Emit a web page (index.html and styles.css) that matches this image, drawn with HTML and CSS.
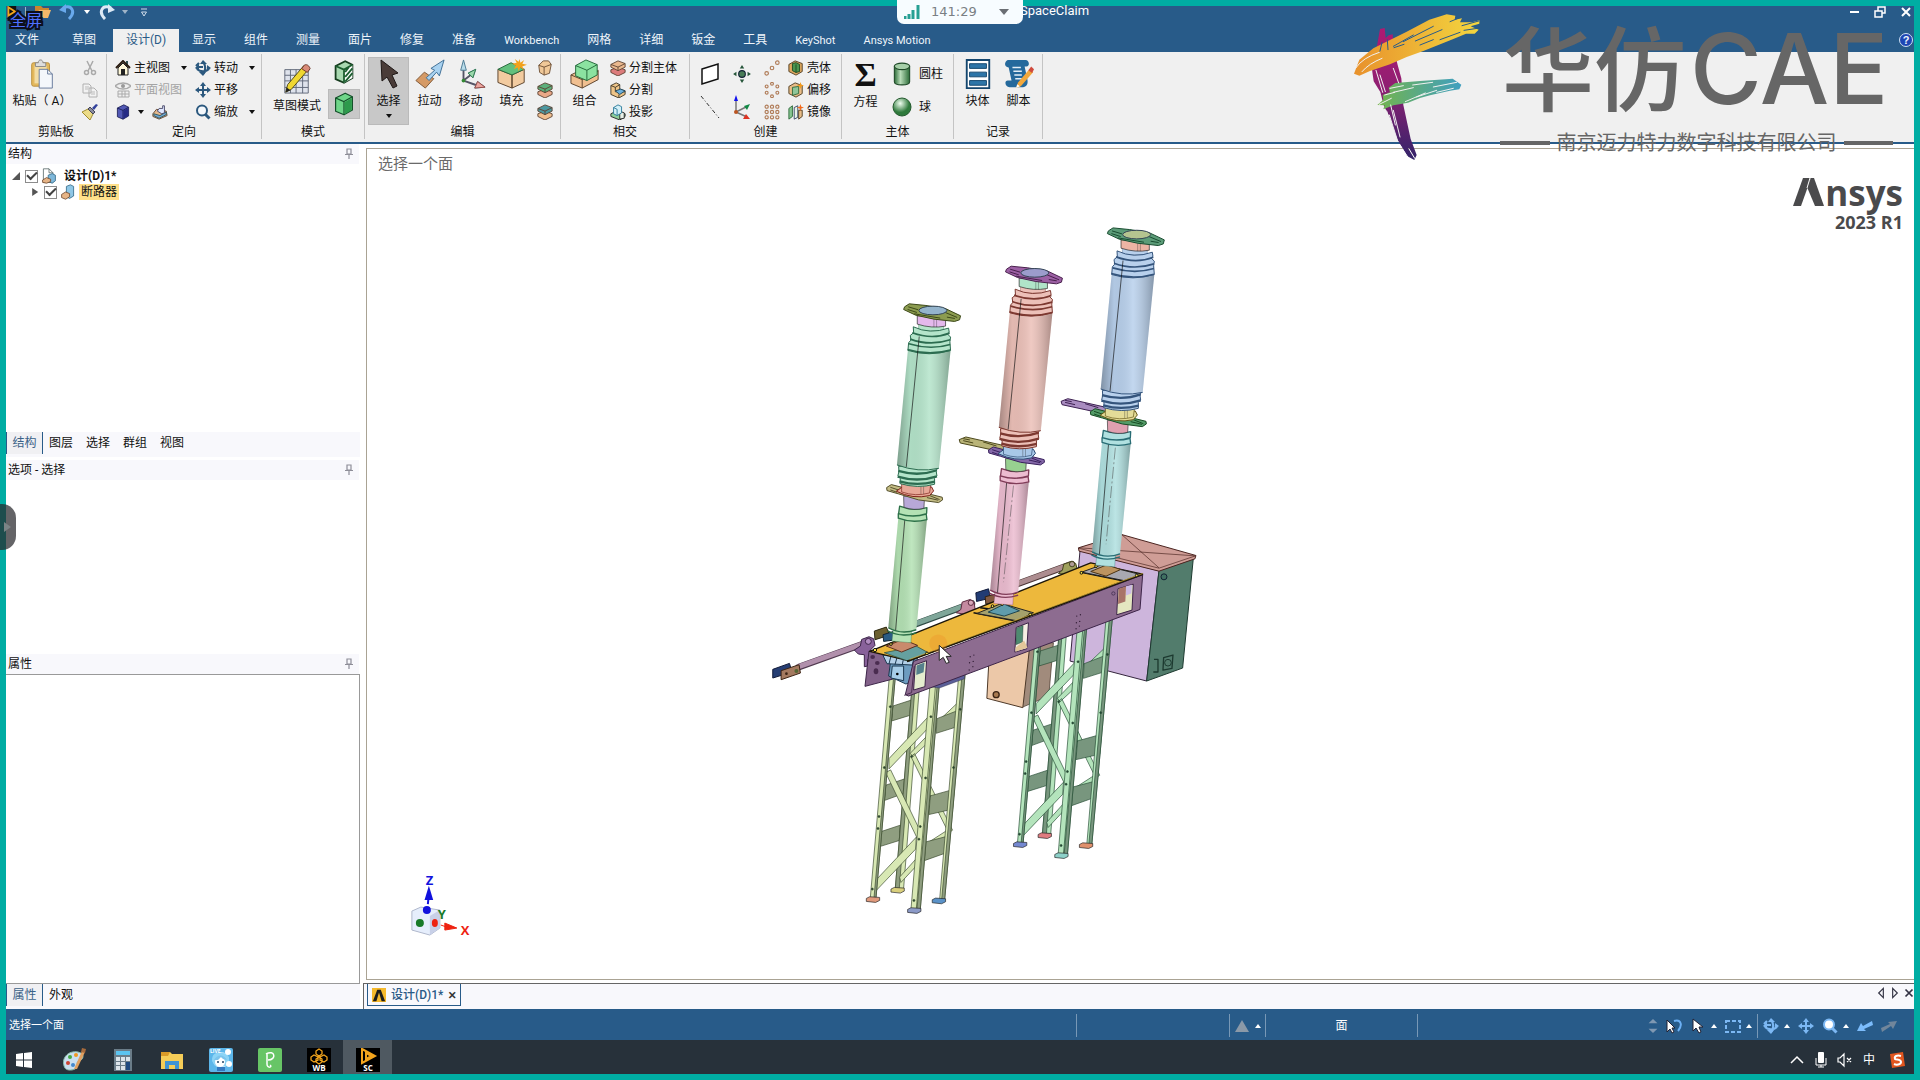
FILE: index.html
```html
<!DOCTYPE html>
<html lang="zh-CN">
<head>
<meta charset="utf-8">
<title>SpaceClaim</title>
<link rel="stylesheet" href="styles.css">
</head>
<body>
<svg class="defs" aria-hidden="true">
  <defs>
    <linearGradient id="yellow" x1="0" x2="1"><stop offset="0" stop-color="#e8912c"/><stop offset="1" stop-color="#f3d63f"/></linearGradient>
    <linearGradient id="purple" x1="0" y1="0" x2="0" y2="1"><stop offset="0" stop-color="#b01a72"/><stop offset=".45" stop-color="#8f1f72"/><stop offset="1" stop-color="#33246a"/></linearGradient>
    <linearGradient id="green" x1="0" x2="1"><stop offset="0" stop-color="#74b44c"/><stop offset="1" stop-color="#3f9fc0"/></linearGradient>
    <linearGradient id="cyl" x1="0" x2="1"><stop offset="0" stop-color="#2c6c38"/><stop offset=".4" stop-color="#b8dcb8"/><stop offset="1" stop-color="#2c6c38"/></linearGradient>
    <radialGradient id="ball" cx=".4" cy=".3"><stop offset="0" stop-color="#f0fff0"/><stop offset="1" stop-color="#2f7a3c"/></radialGradient>
    <linearGradient id="shade" x1="0" x2="1"><stop offset="0" stop-color="#000" stop-opacity=".3"/><stop offset=".25" stop-color="#000" stop-opacity=".04"/><stop offset=".6" stop-color="#fff" stop-opacity=".15"/><stop offset="1" stop-color="#000" stop-opacity=".28"/></linearGradient>
    <mask id="bristles" maskUnits="userSpaceOnUse" x="0" y="0" width="480" height="480">
      <path d="M0 0h480v480H0z" fill="#fff"/>
      <g fill="none" stroke="#000" stroke-width="3" stroke-linecap="round">
        <path d="M48 188q20-30 70-46M66 200q20-24 60-40M126 112l-6 26M142 104l2 30M160 124l60-34M190 110l90-46M162 128l30-10M226 108l80-34M240 120l40-16M330 50l34-14M366 62l50-14M372 76l40-6M300 104l60-22"/>
        <path d="M108 196l20 66M120 210l16 50M160 190l16 44M140 318l30 90M148 330l34 106M160 316l20 80M180 420l26 40M206 430l18 30M152 300l14 60"/>
        <path d="M118 298l36-18M134 270l30-8M150 250l40-8M160 262l60-14M196 290l60-26M230 276l60-20M280 246l70-14M290 262l50-12M218 240l60-8"/>
      </g>
    </mask>

    <symbol id="cube" viewBox="0 0 20 20"><path d="M3 5l8-4 6 3v11l-7 4-7-3z" fill="var(--a)" stroke="var(--e)" stroke-linejoin="round"/><path d="M3 5l7 3v11M10 8l7-4" fill="none" stroke="var(--e)"/><path d="M10.500 8.500l6-3.500v10l-6 3.500z" fill="var(--b)"/></symbol>
    <symbol id="paste" viewBox="0 0 24 32"><rect x="1" y="4" width="19" height="25" rx="2" fill="#e3b85c" stroke="#b98e3c"/><path d="M4 7h13v19H4z" fill="#f2dca4"/><path d="M5 8V4h3c0-4 5-4 5 0h3v4z" fill="#ddd" stroke="#888"/><path d="M9 11h9l5 5v15H9z" fill="#f4f7fb" stroke="#64779a"/><path d="M18 11v5h5" fill="none" stroke="#64779a"/></symbol>
    <symbol id="cut" viewBox="0 0 16 16"><path d="M5 1l5 10M11 1L6 11" stroke="#aaa" stroke-width="1.500"/><circle cx="4.500" cy="12.500" r="2" fill="none" stroke="#aaa" stroke-width="1.500"/><circle cx="11.500" cy="12.500" r="2" fill="none" stroke="#aaa" stroke-width="1.500"/></symbol>
    <symbol id="copy" viewBox="0 0 16 16"><path d="M1 2h6l2 2v7H1zM7 6h5l3 3v6H7z" fill="#f2f2f2" stroke="#b0b0b0"/><path d="M9 10h4M9 12h4M3 5h4M3 7h3" stroke="#bbb"/></symbol>
    <symbol id="brush" viewBox="0 0 16 16"><path d="M0 8l6-3 5 5-3 6c-3-3-5-5-8-8z" fill="#ecdc88" stroke="#a08c30"/><path d="M6 5l2-2 5 5-2 2z" fill="#8a8ca0" stroke="#445"/><path d="M10 4l4-4 2 1-4 5z" fill="#33429c"/></symbol>
    <symbol id="home" viewBox="0 0 16 16"><path d="M11 1h2v5h-2z" fill="#355"/><path d="M3 8l5-5 5 5v7H3z" fill="#fff8d8" stroke="#222"/><path d="M1 8l7-7 7 7" fill="none" stroke="#2a1c10" stroke-width="2"/><path d="M6 9h4v6H6z" fill="#222"/></symbol>
    <symbol id="plan" viewBox="0 0 16 16"><path d="M0 4c4-4 12-4 16 0-4 4-12 4-16 0z" fill="none" stroke="#aaa" stroke-width="1.500"/><circle cx="8" cy="4" r="2" fill="#999"/><path d="M3 9h11v6H3zM3 12h11M7 9v6M10 9v6" fill="none" stroke="#aaa"/></symbol>
    <symbol id="iso" viewBox="0 0 18 16"><path d="M1 10l4-5 11 2 1 5-9 4-7-3z" fill="#e6b98c" stroke="#5c4330"/><path d="M2 10l7 2 7-4v3l-8 4-6-3z" fill="#6fa8d8" stroke="#355"/><path d="M6 7l2-3h4V1h2v8l-3 1z" fill="#dfe7ff" stroke="#446"/></symbol>
    <symbol id="spin" viewBox="0 0 16 16"><path d="M1 6l3-3M2 9c3 3 9 3 12 0M8 2c3 3 3 9 0 12" fill="none" stroke="currentColor" stroke-width="2.200"/><path d="M8 0l4 4H5zM8 16l3-4H4zM0 8l4-4v7zM16 8l-4-3v6z" fill="currentColor"/><path d="M3 7h5" stroke="currentColor" stroke-width="2"/></symbol>
    <symbol id="pan" viewBox="0 0 16 16"><path d="M8 2v12M2 8h12" stroke="currentColor" stroke-width="2"/><path d="M8 0l3 4H5zM8 16l3-4H5zM0 8l4-3v6zM16 8l-4-3v6z" fill="currentColor"/></symbol>
    <symbol id="zoom" viewBox="0 0 16 16"><circle cx="7" cy="6.500" r="5" fill="var(--a,#f4f8fc)" stroke="currentColor" stroke-width="2"/><path d="M10.500 10.500l4 4" stroke="currentColor" stroke-width="3"/></symbol>
    <symbol id="sketch" viewBox="0 0 30 32"><path d="M2 6h25v25H2zM2 12h25M2 18h25M2 25h25M8 6v25M14 6v25M21 6v25" fill="#dfe3ec" stroke="#5f6678"/><path d="M3 30l2-8L22 2l5 4L9 27z" fill="#efd731" stroke="#4b4414"/><path d="M20 5l3-4c3-1 5 1 6 4l-3 4z" fill="#d98b78" stroke="#6b3528"/><path d="M3 30l1-5 4 3z" fill="#222"/></symbol>
    <symbol id="section" viewBox="0 0 20 20"><path d="M3 5l8-4 6 3v11l-7 4-7-3z" fill="#a8d8b0" stroke="#163c1e" stroke-width="1.500"/><path d="M10 8l7-4v11l-7 4z" fill="#fff"/><path d="M3 5l7 3v11M10 8l7-4M11 14l6-7M11 18l6-7M11 10l3-4" fill="none" stroke="#1c5f30" stroke-width="1.500"/></symbol>
    <symbol id="arrow" viewBox="0 0 20 30"><path d="M2 1l1 21 5-4 6 11 4-2-5-11 6-2z" fill="#4a3c38" stroke="#1f1816"/></symbol>
    <symbol id="pull" viewBox="0 0 32 32"><path d="M1 23l9-9 10 7-9 10z" fill="#d59a66" stroke="#7c5433"/><path d="M12 20l9-8-4-2L31 1l-5 17-3-4-8 9z" fill="#a9d2f0" stroke="#3c6c92"/></symbol>
    <symbol id="move" viewBox="0 0 32 32"><path d="M8 23V8M8 23l9-7M8 23l14 5" stroke="#556" stroke-width="2"/><path d="M8 1l3 11H5zM21 11l-3 9-5-5zM31 30l-11 1 3-7z" fill="#b9dcea" stroke="#4a7890"/><path d="M21 11l-3 9-5-5z" fill="#9bd8ac" stroke="#2c7848"/><path d="M31 30l-11 1 3-7z" fill="#eaa6a0" stroke="#984840"/><circle cx="8" cy="23" r="2" fill="#383"/></symbol>
    <symbol id="fill" viewBox="0 0 32 32"><path d="M1 11l15 6v14L1 25zM16 17l13-6v14l-13 6z" fill="#f2cba0" stroke="#59402a"/><path d="M1 11l14-7 14 7-13 6z" fill="#63c07d" stroke="#28683c"/><path d="M24 0l1 4 4-3-2 4 5 1-5 2 2 4-4-3-2 4-1-4-4 2 2-4-4-2 5-1-2-4 4 3z" fill="#f2a21c"/></symbol>
    <symbol id="shells" viewBox="0 0 16 18"><path d="M1 6l5-5h6l3 4-2 10-6 2-5-3z" fill="#f0c898" stroke="#694a30"/><path d="M1 6l6 2v9M7 8l8-3" fill="none" stroke="#694a30"/></symbol>
    <symbol id="stack" viewBox="0 0 18 18"><path d="M1 11l8-3 8 3v3l-8 4-8-4z" fill="var(--b)" stroke="#5b4232"/><path d="M1 5l8-4 8 3v4l-8 4-8-4z" fill="var(--a)" stroke="#5b4232"/><path d="M1 5l8 3 8-4M9 8v4" fill="none" stroke="#5b4232"/></symbol>
    <symbol id="lstep" viewBox="0 0 18 18"><path d="M1 4l6-3 4 2v5l6 2v4l-7 4-9-4z" fill="#eec488" stroke="#3c3424"/><path d="M1 4l5 2v5l11 0M6 6l5-3M10 18v-4" fill="none" stroke="#3c3424"/><path d="M6 10l6-2 5 2-6 4z" fill="var(--b)" stroke="#245"/></symbol>
    <symbol id="project" viewBox="0 0 18 18"><path d="M1 11l6-3 10 3v3l-6 4-10-4z" fill="#8ccc98" stroke="#222"/><path d="M11 8l5 2v6l-5 1z" fill="#e8f0e8" stroke="#222"/><path d="M4 4l5-3 4 2v7l-5 3-4-2z" fill="#d4f0f8" stroke="#287898"/><path d="M4 4l4 2v7" fill="none" stroke="#287898"/></symbol>
    <symbol id="combine" viewBox="0 0 32 32"><path d="M1 17l8-4 12 5 9-6v10l-17 9-12-5z" fill="#f0bf90" stroke="#59402a"/><path d="M1 17l12 5 17-9M13 22v9" fill="none" stroke="#59402a"/><path d="M6 7l11-6 12 5v11l-11 6-12-5z" fill="#8be2a0" stroke="#216538"/><path d="M6 7l12 5 11-6M18 12v11" fill="none" stroke="#216538"/></symbol>
    <symbol id="plane" viewBox="0 0 20 26"><path d="M2 8l16-5v15L2 23z" fill="#fff" stroke="#111" stroke-width="1.500"/></symbol>
    <symbol id="axis" viewBox="0 0 20 26"><path d="M1 2l18 22" stroke="#333" stroke-dasharray="4 2 1 2"/></symbol>
    <symbol id="point" viewBox="0 0 18 18"><circle cx="9" cy="9" r="3" fill="#477c56" stroke="#123"/><path d="M9 1l2 3H7zM9 17l2-3H7zM1 9l3-2v4zM17 9l-3-2v4z" fill="#26553a"/></symbol>
    <symbol id="csys" viewBox="0 0 18 26"><path d="M3 18V5M3 18l10-5M3 18l11 5" stroke="#777" stroke-width="1.500"/><path d="M3 1l2 6H1z" fill="#11e"/><path d="M17 10l-3 6-3-4z" fill="#184"/><path d="M17 25l-7 0 3-5z" fill="#d32"/><circle cx="3" cy="18" r="2" fill="#b52"/></symbol>
    <symbol id="pline" viewBox="0 0 18 18"><g fill="none" stroke="#b07c58" stroke-width="1.300"><circle cx="3" cy="15" r="2"/><circle cx="9" cy="9" r="2"/><circle cx="15" cy="3" r="2"/></g></symbol>
    <symbol id="pring" viewBox="0 0 18 18"><g fill="none" stroke="#b07c58" stroke-width="1.300"><circle cx="9" cy="2" r="1.600"/><circle cx="3" cy="5" r="1.600"/><circle cx="15" cy="5" r="1.600"/><circle cx="3" cy="12" r="1.600"/><circle cx="15" cy="12" r="1.600"/><circle cx="9" cy="16" r="1.600"/></g></symbol>
    <symbol id="pgrid" viewBox="0 0 18 18"><g fill="none" stroke="#b07c58" stroke-width="1.300"><circle cx="3" cy="3" r="1.800"/><circle cx="9" cy="3" r="1.800"/><circle cx="15" cy="3" r="1.800"/><circle cx="3" cy="9" r="1.800"/><circle cx="9" cy="9" r="1.800"/><circle cx="15" cy="9" r="1.800"/><circle cx="3" cy="15" r="1.800"/><circle cx="9" cy="15" r="1.800"/><circle cx="15" cy="15" r="1.800"/></g></symbol>
    <symbol id="shell" viewBox="0 0 18 18"><path d="M1 5l7-4 8 3v9l-7 4-8-4z" fill="#e0a860" stroke="#4c381c"/><path d="M5 4l4-1 4 2v8l-4 1-4-2z" fill="#4a9550" stroke="#1c4820"/><path d="M9 5v9" stroke="#1c4820"/></symbol>
    <symbol id="offset" viewBox="0 0 18 18"><path d="M1 5l7-4 8 3v9l-7 4-8-4z" fill="#e9bd88" stroke="#4c381c"/><path d="M5 6l7-1v8l-7 2z" fill="#8fc69a" stroke="#2c6838"/><path d="M14 0l1 3 3 1-3 1-1 3-1-3-3-1 3-1z" fill="#f39a1c"/></symbol>
    <symbol id="mirror" viewBox="0 0 18 18"><path d="M1 5l4-3v12l-4 3z" fill="#86c690" stroke="#2c6838"/><path d="M7 4l4-2v13l-4 2z" fill="#e8f4e8" stroke="#346"/><path d="M12 7h4v7l-4 3z" fill="#e9bd88" stroke="#4c381c"/><path d="M14 0l1 3 3 1-3 1-1 3-1-3-3-1 3-1z" fill="#f36a1c"/></symbol>
    <symbol id="cylinder" viewBox="0 0 18 22"><path d="M2 4v14c0 4 14 4 14 0V4z" fill="url(#cyl)" stroke="#1f4a28"/><ellipse cx="9" cy="4" rx="7" ry="3" fill="#a6cfa8" stroke="#1f4a28"/></symbol>
    <symbol id="sphere" viewBox="0 0 20 20"><circle cx="10" cy="10" r="9" fill="url(#ball)" stroke="#245a2e"/></symbol>
    <symbol id="block" viewBox="0 0 26 32"><path d="M1 1h24v30H1z" fill="#fff" stroke="#14466e" stroke-width="2"/><path d="M4 5h18v5H4zM4 14h18v5H4zM4 23h18v5H4z" fill="#2d75a8" stroke="#14466e"/></symbol>
    <symbol id="script" viewBox="0 0 32 32"><path d="M4 1h19c4 0 5 7 1 7h-2l3 14c1 6-2 8-6 8H6c-5 0-6-7-2-7h4L5 9C0 9 0 3 4 1z" fill="#25699c"/><path d="M9 9h9M10 13h9M11 17h8M12 21h7" stroke="#e4eef6" stroke-width="1.500"/><path d="M13 31l2-6L27 11l4 3-13 15z" fill="#f3a83b"/><path d="M26 12l3-4 3 3-2 4z" fill="#cf4a3c"/><path d="M13 31l1-4 3 2z" fill="#fff"/></symbol>
    <symbol id="pin" viewBox="0 0 10 12"><path d="M3 1h4v5H3zM1 6.500h8M5 7v4" fill="none" stroke="#8e8e98" stroke-width="1.200"/></symbol>
    <symbol id="part" viewBox="0 0 18 20"><path d="M7 3l5-2 4 2v12l-5 3-4-2z" fill="#8fc7e6" stroke="#2f6684"/><path d="M1 13l5-3 5 2v4l-5 3-5-2z" fill="#e6b486" stroke="#6b452c"/></symbol>
    <symbol id="doc" viewBox="0 0 18 20"><path d="M2 1h7l5 5v12H2z" fill="#fff" stroke="#566"/><path d="M9 1v5h5" fill="none" stroke="#566"/><path d="M8 9l5-2 4 2v7l-4 3-5-2z" fill="#7fb8da" stroke="#2f6684"/><path d="M1 15l5-3 5 2v3l-5 2-5-1z" fill="#e6b486" stroke="#6b452c"/></symbol>
    <symbol id="pointer" viewBox="0 0 12 16"><path d="M1 1v12l3-3 3 5 2-1-2-5h4z" fill="#fff" stroke="#223"/></symbol>

    <!-- one insulator pole; the colours come from the class of the group that uses it -->
    <g id="pole">
      <path d="M395 1295l5-45h55l-3 50z" fill="var(--l)" stroke="var(--ls)"/>
      <path d="M414 925L384 1255q40 22 84 6L500 930z" fill="var(--l)"/><path d="M414 925L384 1255q40 22 84 6L500 930z" fill="url(#shade)"/>
      <path d="M384 1255q40 22 84 6M382 1264q40 22 86 6" fill="none" stroke="var(--ls)" stroke-width="4"/>
      <path d="M434 925L406 1262" stroke="#111" stroke-width="2"/>
      <path d="M418 890q40 16 82 4l-1 18q-42 14-84 0zM414 912q42 14 84 2l2 16q-44 12-86-4z" fill="var(--l)" stroke="var(--ls)" stroke-width="4"/>
      <path d="M430 860h63l-2 36q-30 8-60-3z" fill="var(--r)" stroke="#333" stroke-width="2"/>
      <path d="M379 834l14-9 55 14 98 24 1 8-12 8-60-8-60-18-35-10z" fill="var(--q)" stroke="var(--qs)" stroke-width="3"/>
      <path d="M390 833l24 8M500 864l34 8M390 841l20 7M508 858l30 12" stroke="var(--qs)" stroke-width="3"/>
      <path d="M408 845l18-13h88l6 12-12 14q-50 12-100-13z" fill="var(--c)" stroke="var(--cs)" stroke-width="3"/>
      <path d="M424 820h88l-4 30q-42 12-84-3z" fill="var(--c)" stroke="var(--cs)" stroke-width="2"/><path d="M482 828v25M490 828v25" stroke="#222"/>
      <path d="M415 770h118l-5 15 2 14-7 7v18q-50 14-104-2l1-15-7-9 3-13z" fill="var(--u)" stroke="var(--us)" stroke-width="3"/>
      <path d="M414 784q60 18 116-2M412 801q60 18 118-1M418 815q50 15 106 1" fill="none" stroke="var(--us)" stroke-width="7"/>
      <path d="M443 420L410 766q64 24 126 10L571 422z" fill="var(--u)"/><path d="M443 420L410 766q64 24 126 10L571 422z" fill="url(#shade)"/>
      <path d="M410 766q64 24 126 10" fill="none" stroke="var(--us)" stroke-width="3"/>
      <path d="M475 335h75v28H475z" fill="var(--u)" stroke="var(--us)"/>
      <path d="M459 351q50 24 106 4l2 13-6 4 10 10-2 14 2 26q-64 20-128 0l2-23 7-8-2-14 10-8z" fill="var(--u)" stroke="var(--us)" stroke-width="3"/>
      <path d="M456 369q60 22 112 1M450 388q60 22 120 2M446 402q64 20 124 2M442 419q64 20 128 2" fill="none" stroke="var(--us)" stroke-width="5"/>
      <path d="M477 380L438 772" stroke="#111" stroke-width="2"/>
      <path d="M471 318h85v31q-42 8-85-6z" fill="var(--n)" stroke="#222" stroke-width="2"/><path d="M521 325v27M529 325v27" stroke="#222"/>
      <path d="M433 291l14-9 50 5 60 10 44 21-3 12-15 5-62-7-55-12-36-17z" fill="var(--p)" stroke="var(--ps)" stroke-width="3"/>
      <path d="M444 291l30 9M442 299l28 9M555 308l36 15M560 322l24 4M462 312l78 13" stroke="var(--ps)" stroke-width="3"/>
      <ellipse cx="518" cy="302" rx="42" ry="13" fill="var(--d)" stroke="#345" stroke-width="3"/>
    </g>

    <!-- one braced steel support -->
    <g id="tower" stroke="var(--ts)" stroke-width="2" stroke-linejoin="round">
      <path d="M158 170l62-20-4 46-62 19zM136 408l60-20-4 44-60 22zM120 548l60-20-3 46-61 19z" fill="var(--tp)"/>
      <path d="M218 80h22L190 718h-25z" fill="var(--t)"/><path d="M218 80h9L177 718h-12z" fill="var(--tp)"/>
      <path d="M210 312l56-58 4 20-52 48zM212 322l11-9 114 230-12 8zM178 684l54-60 4 18-54 58z" fill="var(--t)"/>
      <path d="M264 580l62-40v20l-62 42zM300 210l58-55-2 25-50 45z" fill="var(--t)"/>
      <path d="M290 208l72-28-4 50-70 22zM270 440l72-20-5 60-71 16zM250 580l76-20-5 50-73 26z" fill="var(--tp)"/>
      <path d="M357 60h19L313 754h-15z" fill="var(--t)"/><path d="M367 60h9L313 754h-9z" fill="var(--tp)"/>
      <path d="M146 328l122-130-2 36-120 125zM136 370l15-8 92 190-10 20zM106 694l122-130-2 36-120 126z" fill="var(--t)"/>
      <path d="M149 60h18L107 746H90z" fill="var(--t)"/><path d="M162 60h5L107 746h-6z" fill="var(--tp)"/>
      <path d="M273 60h28L240 782h-28z" fill="var(--t)"/><path d="M295 60h6L240 782h-10z" fill="var(--tp)"/>
      <path d="M290 60L228 780" fill="none"/>
      <g fill="#243"><circle cx="150" cy="172" r="3"/><circle cx="132" cy="355" r="3"/><circle cx="116" cy="502" r="3"/><circle cx="113" cy="538" r="3"/><circle cx="96" cy="720" r="3"/><circle cx="272" cy="202" r="3"/><circle cx="256" cy="386" r="3"/><circle cx="240" cy="532" r="3"/><circle cx="236" cy="570" r="3"/><circle cx="221" cy="754" r="3"/><circle cx="340" cy="355" r="3"/><circle cx="214" cy="322" r="3"/><circle cx="360" cy="180" r="3"/></g>
    </g>
    <path id="foot" d="M-20-4l10-5 30 2v9l-12 6-28-3z" stroke="#222" stroke-width="2"/>
  </defs>
</svg>

<div class="screen">
  <header class="titlebar">
    <div class="quick">
      <svg class="app-logo" viewBox="0 0 14 20"><path d="M0 0h14v20H0z" fill="#111"/><path d="M1 2l11 7-11 7z" fill="none" stroke="#f3a51d" stroke-width="3"/></svg>
      <i class="divider"></i>
      <button aria-label="打开"><svg viewBox="0 0 18 16"><path d="M1 14V2h6l2 2h6v3" fill="#c9852e"/><path d="M1 14l4-8h12l-3 8z" fill="#f5b96a"/></svg></button>
      <button aria-label="撤销"><svg viewBox="0 0 18 16"><path d="M4 4c9-4 13 4 6 11" fill="none" stroke="#69a9ec" stroke-width="3"/><path d="M0 6l7-6v9z" fill="#69a9ec"/></svg></button>
      <i class="caret light"></i>
      <button aria-label="重做"><svg viewBox="0 0 18 16"><path d="M14 4C5 0 1 8 8 15" fill="none" stroke="#dde9f5" stroke-width="3"/><path d="M18 6l-7-6v9z" fill="#dde9f5"/></svg></button>
      <i class="caret dim"></i>
      <button aria-label="自定义"><svg viewBox="0 0 18 16"><path d="M6 5h6M6.500 8h5L9 12z" fill="none" stroke="#cfdcea"/></svg></button>
    </div>
    <span class="app-title">SpaceClaim</span>
    <div class="window">
      <button aria-label="最小化"><svg viewBox="0 0 16 16"><path d="M4 8h9" stroke="#fff" stroke-width="2"/></svg></button>
      <button aria-label="还原"><svg viewBox="0 0 16 16"><path d="M3 7h7v6H3zM6 7V3h7v6h-3" fill="none" stroke="#fff" stroke-width="1.500"/></svg></button>
      <button aria-label="关闭"><svg viewBox="0 0 16 16"><path d="M4 4l8 8M12 4l-8 8" stroke="#fff" stroke-width="2"/></svg></button>
    </div>
  </header>

  <nav class="tabs">
    <button class="file">文件</button><button class="draft">草图</button><button class="current">设计(D)</button><button>显示</button><button>组件</button><button>测量</button><button>面片</button><button>修复</button><button>准备</button><button class="latin">Workbench</button><button>网格</button><button>详细</button><button>钣金</button><button>工具</button><button class="latin">KeyShot</button><button class="latin">Ansys Motion</button>
    <button class="help" aria-label="帮助">?</button>
  </nav>

  <div class="ribbon">
    <section class="group clipboard"><div class="body">
      <button class="big"><svg><use href="#paste"/></svg>粘贴（ A）</button>
      <div class="rows"><button aria-label="剪切"><svg><use href="#cut"/></svg></button><button aria-label="复制"><svg><use href="#copy"/></svg></button><button aria-label="格式刷"><svg><use href="#brush"/></svg></button></div>
    </div><h2>剪贴板</h2></section>

    <section class="group orient"><div class="body">
      <div class="rows"><button><svg><use href="#home"/></svg>主视图<i class="caret"></i></button><button disabled><svg><use href="#plan"/></svg>平面视图</button><div class="pair"><button><svg class="c-navy"><use href="#cube"/></svg><i class="caret"></i></button><button><svg><use href="#iso"/></svg></button></div></div>
      <div class="rows steel"><button><svg><use href="#spin"/></svg>转动<i class="caret"></i></button><button><svg><use href="#pan"/></svg>平移</button><button><svg><use href="#zoom"/></svg>缩放<i class="caret"></i></button></div>
    </div><h2>定向</h2></section>

    <section class="group mode"><div class="body">
      <button class="big low"><svg><use href="#sketch"/></svg>草图模式</button>
      <div class="toggles"><button aria-label="剖面模式"><svg><use href="#section"/></svg></button><button class="on" aria-label="三维模式"><svg class="c-green"><use href="#cube"/></svg></button></div>
    </div><h2>模式</h2></section>

    <section class="group edit"><div class="body">
      <button class="big on"><svg><use href="#arrow"/></svg>选择<i class="caret"></i></button>
      <button class="big"><svg><use href="#pull"/></svg>拉动</button>
      <button class="big"><svg><use href="#move"/></svg>移动</button>
      <button class="big"><svg><use href="#fill"/></svg>填充</button>
      <div class="rows"><button><svg><use href="#shells"/></svg></button><button><svg class="c-mint"><use href="#stack"/></svg></button><button><svg class="c-teal"><use href="#stack"/></svg></button></div>
    </div><h2>编辑</h2></section>

    <section class="group cross"><div class="body">
      <button class="big"><svg><use href="#combine"/></svg>组合</button>
      <div class="rows"><button><svg class="c-split"><use href="#stack"/></svg>分割主体</button><button><svg class="c-blue"><use href="#lstep"/></svg>分割</button><button><svg><use href="#project"/></svg>投影</button></div>
    </div><h2>相交</h2></section>

    <section class="group create"><div class="body">
      <div class="halves"><button aria-label="平面"><svg><use href="#plane"/></svg></button><button aria-label="轴"><svg><use href="#axis"/></svg></button></div>
      <div class="halves"><button aria-label="点"><svg><use href="#point"/></svg></button><button aria-label="坐标系"><svg><use href="#csys"/></svg></button></div>
      <div class="rows"><button aria-label="线性阵列"><svg><use href="#pline"/></svg></button><button aria-label="圆形阵列"><svg><use href="#pring"/></svg></button><button aria-label="填充阵列"><svg><use href="#pgrid"/></svg></button></div>
      <div class="rows"><button><svg><use href="#shell"/></svg>壳体</button><button><svg><use href="#offset"/></svg>偏移</button><button><svg><use href="#mirror"/></svg>镜像</button></div>
    </div><h2>创建</h2></section>

    <section class="group solid"><div class="body">
      <button class="big"><span class="sigma">Σ</span>方程</button>
      <div class="halves"><button><svg><use href="#cylinder"/></svg>圆柱</button><button><svg><use href="#sphere"/></svg>球</button></div>
    </div><h2>主体</h2></section>

    <section class="group record"><div class="body">
      <button class="big"><svg><use href="#block"/></svg>块体</button>
      <button class="big"><svg><use href="#script"/></svg>脚本</button>
    </div><h2>记录</h2></section>
  </div>

  <main class="workspace">
    <aside class="side">
      <section class="panel tree">
        <h3>结构<svg><use href="#pin"/></svg></h3>
        <ul>
          <li><i class="open"></i><input type="checkbox" id="n1" checked><svg><use href="#doc"/></svg><label for="n1" class="root">设计(D)1*</label></li>
          <li class="child"><i class="shut"></i><input type="checkbox" id="n2" checked><svg><use href="#part"/></svg><label for="n2" class="hot">断路器</label></li>
        </ul>
      </section>
      <div class="dock"><button class="current">结构</button><button>图层</button><button>选择</button><button>群组</button><button>视图</button></div>
      <section class="panel options"><h3>选项 - 选择<svg><use href="#pin"/></svg></h3></section>
      <section class="panel props"><h3>属性<svg><use href="#pin"/></svg></h3><div class="sheet"></div></section>
      <div class="dock last"><button class="current">属性</button><button>外观</button></div>
    </aside>

    <section class="stage">
      <div class="canvas">
        <svg class="model" viewBox="367 149 1547 831" role="img" aria-label="断路器">
          <g transform="translate(760 480) scale(.33333)" stroke-linejoin="round">
            <!-- control cabinet -->
            <path d="M960 212l237 62-37 331-230-60z" fill="#cdb5dc" stroke="#33243c" stroke-width="3"/>
            <path d="M1197 274l103-36-32 328-108 39z" fill="#527c6c" stroke="#1d3a30" stroke-width="3"/>
            <path d="M955 205l130-40 223 63-3 10-108 37-240-60z" fill="#cf9d96" stroke="#4a2420" stroke-width="3"/>
            <path d="M1085 165l112 100M960 205l345 24M955 206l242 60 110-37" fill="none" stroke="#4a2420" stroke-width="2"/>
            <circle cx="1212" cy="292" r="9" fill="#3f7060" stroke="#123" stroke-width="3"/><path d="M1182 540h12v38h-14M1211 535l28-8-3 40-27 5z" fill="none" stroke="#1d3a30" stroke-width="4"/><circle cx="1224" cy="550" r="10" fill="none" stroke="#1d3a30" stroke-width="3"/>
            <!-- hanging box -->
            <path d="M808 490l72 0-14 160-80 34z" fill="#a18b7c" stroke="#3c2c20" stroke-width="2"/>
            <path d="M688 510l122-20-22 195-108-28z" fill="#ecc8a8" stroke="#4c3828" stroke-width="3"/><circle cx="708" cy="646" r="9" fill="#a87a50" stroke="#3c2414" stroke-width="4"/>
          </g>
          <g transform="translate(840 650) scale(.33333)">
            <g class="t-yellow"><use href="#tower"/></g>
            <g class="t-green" transform="translate(442 -165)"><use href="#tower"/></g>
            <use href="#foot" x="98" y="752" fill="#e09a7c"/><use href="#foot" x="172" y="724" fill="#d9cf7c"/><use href="#foot" x="222" y="785" fill="#8c9ac8"/><use href="#foot" x="296" y="756" fill="#5a92c8"/>
            <use href="#foot" x="540" y="587" fill="#7488d0"/><use href="#foot" x="614" y="560" fill="#e07c80"/><use href="#foot" x="664" y="620" fill="#8cd0c8"/><use href="#foot" x="738" y="590" fill="#e0906c"/>
          </g>
          <g transform="translate(760 480) scale(.33333)" stroke-linejoin="round">
            <!-- drive rods -->
            <g fill="none" stroke-linecap="round"><path d="M115 563l215-77" stroke="#513a50" stroke-width="20"/><path d="M115 562l215-77" stroke="#b190ac" stroke-width="15"/><path d="M460 436l175-64" stroke="#2f4a44" stroke-width="20"/><path d="M460 435l175-64" stroke="#7fa699" stroke-width="15"/><path d="M770 314l165-60" stroke="#4a3434" stroke-width="20"/><path d="M770 313l165-60" stroke="#ad8d90" stroke-width="15"/></g>
            <path d="M37 570l50-18 8 26-58 18z" fill="#263e74" stroke="#111a38" stroke-width="3"/><path d="M62 574l54-18 4 25-58 20z" fill="#a47a60" stroke="#3c2414" stroke-width="3"/><circle cx="108" cy="575" r="6" fill="#563"/><circle cx="78" cy="583" r="4" fill="#3c2414"/>
            <path d="M342 455l36-12 10 24-44 14z" fill="#6c6030" stroke="#2c2810" stroke-width="3"/><path d="M368 466l32-10v26l-30 4z" fill="#2b5c84" stroke="#123" stroke-width="3"/>
            <path d="M647 340l38-12 6 28-42 10z" fill="#223c74" stroke="#111a38" stroke-width="3"/><path d="M675 352l30-8v24l-28 6z" fill="#835a40" stroke="#321" stroke-width="3"/>
            <path d="M282 512l18-12 4-20 22-8 14 6 4 20-12 12v20l-10 10 0 20-10 2 0-36-18-2z" fill="#88619a" stroke="#3c2448" stroke-width="3"/><circle cx="324" cy="486" r="9" fill="#b18cc0" stroke="#3c2448" stroke-width="3"/>
            <path d="M588 400l14-10 4-22 24-8 12 8 2 18 6 10-28 10z" fill="#c48aa0" stroke="#5c2c40" stroke-width="3"/><circle cx="632" cy="370" r="8" fill="#d8a8b8" stroke="#5c2c40" stroke-width="3"/>
            <path d="M895 282l12-10 4-18 24-8 12 6 4 16-24 18z" fill="#9fa05c" stroke="#44451c" stroke-width="3"/><circle cx="936" cy="254" r="8" fill="#b09c98" stroke="#44451c" stroke-width="3"/>
            <!-- beam -->
            <path d="M326 515l-12 106 84-22 40-60z" fill="#83628a" stroke="#3c2448" stroke-width="3"/>
            <g fill="#4a2c50"><ellipse cx="337" cy="533" rx="7" ry="6"/><ellipse cx="351" cy="551" rx="7" ry="6"/><ellipse cx="347" cy="576" rx="7" ry="9"/></g>
            <path d="M385 590l8-60 42-8 36 8v70l-34 14z" fill="#6d9cc0" stroke="#1c3850" stroke-width="3"/><path d="M368 528l70-16 24 20-6 25-76-4z" fill="#b4d0e8" stroke="#1c3850" stroke-width="3"/><path d="M392 530l-6 24M412 528l-8 28M432 526l-6 30" stroke="#1c3850" stroke-width="3"/><path d="M396 560h34v44l-38-8z" fill="#a7cde8" stroke="#1c3850" stroke-width="3"/><circle cx="411" cy="584" r="4"/>
            <path d="M508 622l105-38v14l-75 28z" fill="#5b5f98" stroke="#223"/>
            <path d="M328 516L992 250l156 34-704 260z" fill="#edb83c" stroke="#1c1608" stroke-width="4"/>
            <path d="M400 500l100 22M660 385l160 20M640 400l132 26M960 278l132 27" stroke="#111" stroke-width="4"/>
            <path d="M372 520l96-20 36 20-58 26z" fill="#65a0a0" stroke="#243" stroke-width="2"/>
            <path d="M650 402l74-30 96 28-50 24z" fill="#a5a16c" stroke="#222" stroke-width="3"/><path d="M965 278l60-22 120 30-50 18z" fill="#a8a8b0" stroke="#222" stroke-width="3"/>
            <path d="M460 546l688-260-8 104-695 260-10-4z" fill="#8d6c90" stroke="#3c2448" stroke-width="3"/>
            <path d="M440 546l708-262" stroke="#1c1608" stroke-width="5"/><path d="M448 540l700-258" stroke="#e3b93c" stroke-width="2"/>
            <path d="M462 560l-8 80-22 8" fill="none" stroke="#4a2c50" stroke-width="3"/>
            <path d="M465 556l34-12-5 78-34 10z" fill="#e5edcf" stroke="#3c2448" stroke-width="3"/><path d="M469 558l24-9-3 30-22 8z" fill="#56808c"/>
            <path d="M768 444l37-14-5 78-36 10z" fill="#f6f0e4" stroke="#3c2448" stroke-width="3"/><path d="M769 446l20-8-2 50-20 8z" fill="#4e8a70" stroke="#122"/><path d="M766 505l26-22 10 22-36 12z" fill="#e3c79a"/>
            <path d="M1074 328l46-14-4 78-46 14z" fill="#e4e6c0" stroke="#3c2448" stroke-width="3"/><path d="M1076 328l22-8-2 46-22 8z" fill="#a87468"/><path d="M1098 320l18-4-2 26-16 6z" fill="#cdbbe4"/><circle cx="1060" cy="342" r="5" fill="none" stroke="#324" stroke-width="2"/>
            <g fill="#301c34"><circle cx="630" cy="532" r="2"/><circle cx="641" cy="527" r="2"/><circle cx="628" cy="550" r="2"/><circle cx="639" cy="546" r="2"/><circle cx="627" cy="572" r="2"/><circle cx="638" cy="562" r="2"/><circle cx="950" cy="410" r="2"/><circle cx="961" cy="406" r="2"/><circle cx="949" cy="430" r="2"/><circle cx="959" cy="426" r="2"/><circle cx="948" cy="448" r="2"/><circle cx="958" cy="440" r="2"/></g>
            <!-- pole bases -->
            <path d="M378 500l50-20 44 18-48 20z" fill="#c98a6c" stroke="#5c3020" stroke-width="3"/><path d="M684 398l48-24 46 20-46 16z" fill="#5f9cac" stroke="#1c4450" stroke-width="3"/><path d="M992 276l48-20 42 14-44 20z" fill="#bd9460" stroke="#4c3414" stroke-width="3"/>
            <g fill="#ffe94a" stroke="#111" stroke-width="3"><circle cx="344" cy="512" r="5"/><circle cx="392" cy="494" r="4"/><circle cx="697" cy="380" r="4"/><circle cx="726" cy="374" r="4"/><circle cx="964" cy="280" r="4"/><circle cx="1008" cy="260" r="4"/><circle cx="1130" cy="288" r="4"/><circle cx="810" cy="405" r="4"/><circle cx="500" cy="522" r="4"/></g>
          </g>
          <g transform="translate(760 210) scale(.33333)" stroke-linejoin="round">
            <path d="M903 575l20-8 115 26-2 20-130-28z" fill="#a98cc0" stroke="#3c2050" stroke-width="3"/><path d="M915 578l30 7M975 582l40 12M915 572l20 4" stroke="#3c2050" stroke-width="3"/>
            <path d="M597 690l20-8 115 26-2 20-130-28z" fill="#b9b478" stroke="#4c481c" stroke-width="3"/><path d="M609 693l30 7M669 697l40 12M609 687l20 4" stroke="#4c481c" stroke-width="3"/>
            <g class="pole-c" transform="translate(612 -228)"><use href="#pole"/></g>
            <g class="pole-b" transform="translate(306 -113)"><use href="#pole"/></g>
            <g class="pole-a"><use href="#pole"/></g>
            <path d="M760 828l-30 290M1066 714l-28 290" stroke="#444" stroke-width="1.500" stroke-dasharray="36 8 6 8" fill="none"/>
          </g>
          <circle cx="938" cy="644" r="9" fill="#f08c28" opacity=".3"/>
          <path d="M939 646v15l4-3 3 6 3-1-3-6h5z" fill="#fff" stroke="#222"/>
          <!-- view triad -->
          <g transform="translate(400 870)">
            <path d="M27 35l1-10M28 20l3 10h-6z" stroke="#11d" stroke-width="2" fill="#11d"/>
            <path d="M11 42l9-4 19 3v18l-10 7-18-5z" fill="#e6eefc" stroke="#b0b8cc"/><path d="M29 47l10-6v18l-10 7z" fill="#c8d0e8"/>
            <circle cx="26" cy="41" r="4" fill="#11d"/><circle cx="19" cy="54" r="4" fill="#187a28"/><ellipse cx="34" cy="54" rx="3" ry="4" fill="#e21"/>
            <path d="M40 56l6 2M44 54l12 5-12 2z" stroke="#e21" fill="#e21"/>
            <text x="25" y="16" class="axis z">Z</text><text x="37" y="50" class="axis y">Y</text><text x="60" y="66" class="axis x">X</text>
          </g>
        </svg>
        <p class="prompt">选择一个面</p>
        <div class="brand"><div><svg viewBox="0 0 32 28"><path d="M0 28L10 0h8L8 28z" fill="#4a4a4c"/><path d="M18 0h3l10 28h-9L14 9z" fill="#4a4a4c"/><path d="M17 0l-3 10" stroke="#fff"/></svg>nsys</div><small>2023 R1</small></div>
      </div>
      <div class="doc-tabs">
        <div class="doc-tab"><svg viewBox="0 0 16 16"><path d="M0 0h16v16H0z" fill="#f5b92c"/><path d="M1 15L6 2h4l5 13h-4L8 5 5 15z" fill="#1c1c1c"/></svg><span>设计(D)1*</span><button aria-label="关闭文档">×</button></div>
        <div class="scrollers"><button aria-label="向左"><svg viewBox="0 0 12 12"><path d="M8 2v8L4 6z" fill="none" stroke="#334"/></svg></button><button aria-label="向右"><svg viewBox="0 0 12 12"><path d="M4 2v8l4-4z" fill="none" stroke="#334"/></svg></button><button aria-label="关闭"><svg viewBox="0 0 12 12"><path d="M3 3l6 6M9 3l-6 6" stroke="#334" stroke-width="1.500"/></svg></button></div>
      </div>
    </section>
  </main>

  <footer class="status">
    <span class="message">选择一个面</span>
    <span class="cell wide"></span>
    <span class="cell warn"><svg viewBox="0 0 14 12"><path d="M7 0l7 12H0z" fill="#8b99a8"/></svg><i class="up"></i></span>
    <span class="cell kind">面</span>
    <span class="cell tools">
      <svg class="spinner" viewBox="0 0 10 18"><path d="M5 1l5 5H0zM5 17l5-5H0z" fill="#7f98b2"/></svg>
      <button><svg viewBox="0 0 16 16"><path d="M1 2v12l3-3 2 4 2-1-2-4h3z" fill="#fff" stroke="#223"/><path d="M8 3c7-2 9 4 4 10" fill="none" stroke="#6cb0f4" stroke-width="2"/></svg></button>
      <button><svg><use href="#pointer"/></svg><i class="up"></i></button>
      <button><svg viewBox="0 0 16 16"><path d="M1 3h14v11H1z" fill="none" stroke="#7cb8f4" stroke-width="2" stroke-dasharray="4 2"/></svg><i class="up"></i></button>
      <i class="bar"></i>
      <button><svg><use href="#spin"/></svg><i class="up"></i></button>
      <button><svg><use href="#pan"/></svg></button>
      <button><svg class="lens"><use href="#zoom"/></svg><i class="up"></i></button>
      <button><svg viewBox="0 0 16 16"><path d="M0 13l4-8 2 3 9-5 1 4-9 4 2 2z" fill="#7cbcfb"/></svg></button>
      <button><svg viewBox="0 0 16 16"><path d="M16 3l-4 8-2-3-9 6-1-4 9-4-2-2z" fill="#71869b"/></svg></button>
    </span>
  </footer>

  <div class="taskbar">
    <button aria-label="开始"><svg viewBox="0 0 24 24"><path d="M4 6l7-1v6.500H4zM12 5l8-1v7.500h-8zM4 12.500h7V19l-7-1zM12 12.500h8V20l-8-1z" fill="#fff"/></svg></button>
    <button aria-label="画图"><svg viewBox="0 0 24 24"><path d="M3 20C-2 11 6 2 16 4c8 2 5 8 1 9s0 6-4 8-9 1-10-1z" fill="#c9dff0" stroke="#8ba" /><circle cx="6" cy="15" r="2" fill="#c43"/><circle cx="8" cy="9" r="2" fill="#4a4"/><circle cx="14" cy="7" r="2" fill="#e92"/><circle cx="11" cy="17" r="2" fill="#48c"/><path d="M12 21L20 3l3 1-8 17z" fill="#e0a060"/><path d="M19 4l1-4 4 1-1 4z" fill="#a66a3c"/></svg></button>
    <button aria-label="计算器"><svg viewBox="0 0 24 24"><path d="M3 1h18v22H3z" fill="#6a7c88"/><path d="M5 3h14v4H5z" fill="#5cc4f0"/><path d="M5 9h4v4H5zM10 9h4v4h-4zM15 9h4v4h-4zM5 14h4v3H5zM10 14h4v3h-4zM5 18h4v4H5zM10 18h4v4h-4z" fill="#dce4ea"/><path d="M15 14h4v8h-4z" fill="#1f4a80"/></svg></button>
    <button aria-label="文件资源管理器"><svg viewBox="0 0 24 24"><path d="M1 4h9l2 2h11v15H1z" fill="#f5cd58"/><path d="M1 4h9l-2 4H1z" fill="#d99a28"/><path d="M5 21v-8h14v8h-4v-4H9v4z" fill="#3f94d4"/></svg></button>
    <button aria-label="直播"><svg viewBox="0 0 24 24"><rect width="24" height="24" rx="2" fill="#5cb6ea"/><circle cx="12" cy="12" r="8" fill="#bfe6fa"/><path d="M3 13c0-9 5-8 9-8s9 1 8 9l-3 4H6z" fill="#8cd4f6"/><circle cx="11" cy="14" r="5" fill="#fff"/><path d="M5 12c3-6 10-6 13 0l-4-1-2-2-3 3z" fill="#7cc4ec"/><circle cx="9" cy="14" r="1" fill="#246"/><circle cx="14" cy="14" r="1" fill="#246"/><path d="M8 19h8v4H8z" fill="#3478c0"/><circle cx="20" cy="16" r="3" fill="#fff"/><circle cx="19" cy="4" r="3" fill="#fff"/><text x="1" y="5" class="live">LIVE</text></svg></button>
    <button aria-label="P"><svg viewBox="0 0 24 24"><rect width="24" height="24" rx="2" fill="#67c566"/><path d="M9 5v11c0 5 6 3 3 1M8 6c9-5 11 6 2 6" fill="none" stroke="#fff" stroke-width="1.500"/></svg></button>
    <button aria-label="Workbench"><svg viewBox="0 0 24 24"><path d="M0 0h24v24H0z"/><path d="M12 1l3 2v3l-3 2-3-2V3zM7 7l4 2v3l-4 2-3-2V9zM17 7l3 2v3l-3 2-4-2V9zM12 9l3 2v3l-3 2-3-2v-3z" fill="none" stroke="#f3a51d" stroke-width="1.300"/><text x="12" y="23" class="tile">WB</text></svg></button>
    <button class="on" aria-label="SpaceClaim"><svg viewBox="0 0 24 24"><path d="M0 0h24v24H0z"/><path d="M6 1l13 7-13 7zM10 5l5 3-5 3z" fill="none" stroke="#f3a51d" stroke-width="2"/><text x="12" y="23" class="tile">SC</text></svg></button>
    <div class="tray">
      <button><svg viewBox="0 0 16 16"><path d="M2 11l6-6 6 6" fill="none" stroke="#fff" stroke-width="1.500"/></svg></button>
      <button><svg viewBox="0 0 16 16"><rect x="5" y="0" width="6" height="11" rx="1" fill="#fff"/><path d="M3 6v7h10V6M8 13v2M5 15h6" fill="none" stroke="#fff"/></svg></button>
      <button><svg viewBox="0 0 16 16"><path d="M1 6h2l4-4v12l-4-4H1zM10 6l4 4M14 6l-4 4" fill="none" stroke="#fff" stroke-width="1.200"/></svg></button>
      <button>中</button>
      <button><svg viewBox="0 0 16 16"><path d="M1 2l13-2 2 14-13 2z" fill="#e2561f"/><path d="M12 4c-4-1-7 0-6 3 1 1 6 0 6 3s-5 3-7 2" fill="none" stroke="#fff" stroke-width="2"/></svg></button>
    </div>
  </div>
</div>

<div class="timer"><svg viewBox="0 0 16 16"><path d="M1 12v3M5 10v5M9 6v9M14 1v14" stroke="#27a094" stroke-width="3"/></svg><span>141:29</span><i></i></div>
<div class="fullscreen">全屏</div>
<button class="drawer" aria-label="展开"></button>
<div class="watermark">
  <svg viewBox="0 0 128 148"><g transform="translate(-14 -9) scale(.33333)"><g mask="url(#bristles)">
    <path d="M92 142l18-14 10-56 14-3 3 30 9-8 12-3 3 42 12 50 11 40 6 80 22 102 18 48-7 15-22-12-30-52-20-60-20-40-10-40-20-32-4-28z" fill="url(#purple)"/>
    <path d="M42 206l16-42 42-34 100-50 68-36 52-16 26 4-2 12 22-4-6 12 36 0 22-6v10l-26 8 24 10-12 12h-26l-38 16-90 36-50 18-50 22-60 20-32 14z" fill="url(#yellow)"/>
    <path d="M112 300l18-16-2-14 22-8-4-14 20-14 74-6 98-7 26 18-6 14-28 4-60 14-30 8-36 14-44 8-30 12 4-12z" fill="url(#green)"/>
  </g></g></svg>
  <div class="wm-text"><div class="wm-name">华仿<span>CAE</span></div><div class="wm-company">南京迈力特力数字科技有限公司</div></div>
</div>
</body>
</html>
```
FILE: styles.css
```css
* { box-sizing: border-box; }
body { margin: 0; font: 12px/16px Roboto, "Noto Sans CJK SC", sans-serif; color: #111; background: #fff; overflow: hidden; }
button { font: inherit; color: inherit; background: none; border: 0; padding: 0; margin: 0; }
h2, h3, p, ul { margin: 0; padding: 0; font-size: 12px; font-weight: 400; list-style: none; }
svg { display: block; flex: none; }
.defs { position: absolute; width: 0; height: 0; }
.screen { min-height: 100vh; display: flex; flex-direction: column; border: 6px solid #00ada3; background: #fff; }

.caret { flex: none; width: 0; border: 3px solid transparent; border-top: 4px solid #111; border-bottom: 0; }
.caret.light { border-top-color: #fff; }
.caret.dim { border-top-color: #9fb4c8; }
.up { flex: none; width: 0; border: 3px solid transparent; border-bottom: 4px solid #fff; border-top: 0; }

.titlebar { display: flex; height: 23px; background: #285b89; color: #fff; position: relative; }
.quick { display: flex; align-items: center; gap: 7px; height: 12px; }
.quick svg { width: 18px; height: 16px; }
.quick .app-logo { width: 12px; height: 12px; }
.quick .divider { width: 1px; height: 11px; background: #9fb4c8; margin-right: 1px; }
.app-title { position: absolute; left: 1014px; top: -3px; font-size: 13px; }
.window { margin-left: auto; display: flex; gap: 10px; height: 11px; align-items: center; }
.window svg { width: 16px; height: 16px; }

.tabs { display: flex; height: 23px; background: #285b89; color: #eef4fa; }
.tabs button { padding: 0 14px 2px; }
.tabs .latin { font-size: 11px; padding-bottom: 0; }
.tabs .file { padding: 0 24px 2px 9px; }
.tabs .draft { padding: 0 17px 2px 9px; }
.tabs .current { background: #f0f0f0; color: #2a5a86; width: 66px; padding: 0 0 2px; margin-right: -1px; }
.tabs .help { margin: 4px 1px 0 auto; padding: 0; width: 14px; height: 14px; border-radius: 50%; border: 1px solid #cfe0f4; background: #1e46b4; font: bold 11px/12px "Liberation Sans", sans-serif; }

.ribbon { display: flex; height: 92px; background: #f0f0f0; border-bottom: 2px solid #285b89; }
.group { display: flex; flex-direction: column; position: relative; padding-top: 5px; border-right: 1px solid #c4c4c4; border-image: linear-gradient(transparent 3px, #c4c4c4 3px, #c4c4c4 86px, transparent 86px) 1; }
.group h2 { text-align: center; line-height: 18px; }
.body { display: flex; height: 66px; }
.big { display: flex; flex-direction: column; align-items: center; width: 41px; padding-top: 2px; line-height: 20px; white-space: nowrap; }
.big svg { width: 32px; height: 30px; margin-bottom: 2px; }
.big.low { padding-top: 7px; }
.big.on { height: 68px; background: #c8c8c8; border: 1px solid #bababa; padding-top: 1px; }
.big .caret { margin-top: 3px; }
.rows { display: grid; grid-template-rows: repeat(3, 22px); }
.halves { display: grid; grid-template-rows: repeat(2, 33px); }
.rows button, .halves button, .pair { display: flex; align-items: center; gap: 3px; }
.rows svg { width: 16px; height: 16px; }
.rows button:disabled { color: #a4a4a4; }
.rows .caret { margin-left: 8px; }
.steel svg { color: #2b587e; }
.clipboard { width: 101px; } .clipboard .big { width: 64px; margin-left: 4px; } .clipboard .rows { margin-left: 8px; }
.orient { width: 155px; } .orient .body { padding-left: 8px; } .orient .rows:first-child { width: 80px; } .pair { gap: 8px; } .pair .caret { margin-left: 4px; }
.mode { width: 103px; } .mode .big { width: 60px; margin-left: 5px; margin-right: 1px; }
.toggles { display: flex; flex-direction: column; gap: 2px; }
.toggles button { display: grid; place-items: center; width: 32px; height: 30px; }
.toggles svg { width: 24px; height: 24px; }
.toggles .on { background: #c8c8c8; border: 1px solid #bababa; }
.edit { width: 196px; } .edit .body { padding-left: 3px; } .edit .rows { margin-left: 5px; }
.cross { width: 129px; } .cross .body { padding-left: 3px; } .cross .rows { margin-left: 5px; }
.create { width: 152px; } .create .body { padding-left: 10px; } .create .halves { width: 32px; } .create .rows { width: 24px; } .create .rows:last-child { width: 48px; }
.create .halves svg { width: 20px; height: 26px; }
.solid { width: 112px; } .solid .body { padding-left: 3px; } .solid .halves { margin-left: 6px; } .solid .halves svg { width: 20px; height: 24px; } .solid .halves button { gap: 7px; }
.sigma { font: bold 34px/32px "Liberation Serif", serif; height: 33px; }
.record { width: 89px; } .record .body { padding-left: 3px; }
.c-navy { --a: #5158b4; --b: #262b86; --e: #14184e; }
.c-green { --a: #6fd689; --b: #2d9a4c; --e: #14502a; }
.c-mint { --a: #5cb07c; --b: #e9a888; }
.c-teal { --a: #4d98a0; --b: #f0c090; }
.c-split { --a: #eab88e; --b: #dc7c7c; }
.c-blue { --b: #6cb0dc; }

.workspace { flex: 1; display: flex; min-height: 0; }
.side { width: 354px; display: flex; flex-direction: column; }
.panel h3 { display: flex; align-items: center; justify-content: space-between; height: 20px; padding: 0 5px 0 2px; margin-right: 1px; background: #f8f8fc; }
.panel h3 svg { width: 10px; height: 12px; }
.tree { height: 288px; }
.tree ul { padding: 4px 0 0 6px; }
.tree li { display: flex; align-items: center; height: 16px; }
.tree li svg { width: 18px; height: 16px; margin: 0 2px; }
.tree .child { padding-left: 19px; }
.tree .root { font-weight: 700; margin-left: 4px; }
.tree .hot { background: #ffe08a; padding: 0 2px; }
.tree input { appearance: none; width: 13px; height: 13px; margin: 0; border: 1px solid #8c8c8c; background: #fff; display: grid; place-items: center; }
.tree input::after { content: ""; width: 8px; height: 4px; border: solid #444; border-width: 0 0 2px 2px; transform: rotate(-45deg) translate(1px, -1px); }
.open, .shut { width: 8px; height: 8px; margin-right: 5px; background: #555; clip-path: polygon(100% 0, 100% 100%, 0 100%); }
.shut { clip-path: polygon(15% 0, 90% 50%, 15% 100%); }
.dock { display: flex; height: 25px; margin-bottom: 3px; background: #f8f8fc; }
.dock button { height: 22px; padding: 0 6px; margin-right: 1px; }
.dock .current { color: #3a6288; background: #f0f0f3; border: solid #285b89; border-width: 0 1px; width: 37px; padding: 0; margin: 0; }
.options { height: 194px; }
.props { flex: 1; display: flex; flex-direction: column; }
.sheet { flex: 1; border: 1px solid #999; border-left: 0; }
.dock.last { margin: 0; height: 25px; }

.stage { flex: 1; min-width: 0; display: flex; flex-direction: column; padding: 4px 0 0 6px; }
.canvas { flex: 1; position: relative; border: 1px solid #aaa394; border-right: 0; }
.model { position: absolute; inset: 0; width: 100%; height: 100%; }
.prompt { position: relative; padding: 6px 11px; font-size: 15px; line-height: 18px; color: #6a6a6a; }
.brand { position: absolute; top: 26px; right: 11px; text-align: right; color: #4a4a4c; font: 700 35px/36px "Open Sans", sans-serif; }
.brand div { display: flex; justify-content: flex-end; }
.brand svg { width: 32px; height: 28px; margin-top: 3px; }
.brand small { display: block; font-size: 18px; font-weight: 700; line-height: 20px; margin-top: 1px; }
.axis { font: bold 13px "Open Sans", sans-serif; }
.z { fill: #11d; } .y { fill: #187a28; } .x { fill: #e21; }
.pole-a { --u: #b4e4ca; --us: #2c6c50; --l: #b4e2b4; --ls: #2c7048; --n: #e4b8ec; --p: #8c9c50; --ps: #3c4818; --d: #94b4cc; --c: #e8a898; --cs: #7c2018; --q: #c4bc84; --qs: #54502c; --r: #b8a8d8; }
.pole-b { --u: #ecc0b8; --us: #7c3830; --l: #ecbcd0; --ls: #803c58; --n: #b0e4c8; --p: #9c60a4; --ps: #48204c; --d: #9c9ccc; --c: #a8c8e8; --cs: #284870; --q: #8468a8; --qs: #38205c; --r: #98d090; }
.pole-c { --u: #b8d0ec; --us: #34547c; --l: #b0e0e0; --ls: #286c74; --n: #ecb4a4; --p: #5c9c78; --ps: #184c30; --d: #b4c490; --c: #e4dc98; --cs: #645414; --q: #549c68; --qs: #184c24; --r: #e0a0b0; }
.t-yellow { --t: #d8e8b4; --tp: #8f9e80; --ts: #38482c; }
.t-green { --t: #b4e4bc; --tp: #78967e; --ts: #244c34; }
.doc-tabs { display: flex; justify-content: space-between; height: 26px; margin: 3px 0 0 -3px; padding-left: 3px; background: #f8f8fc; border: solid #666; border-width: 1px 0 0 1px; }
.doc-tab { display: flex; align-items: center; gap: 5px; height: 22px; padding: 0 4px; border: 1px solid #285b89; border-top: 0; color: #2a5a86; font-weight: 500; }
.doc-tab svg { width: 14px; height: 14px; }
.doc-tab button { font-size: 15px; color: #333; }
.scrollers { display: flex; align-items: flex-start; margin-right: -2px; }
.scrollers svg { width: 14px; height: 18px; }

.status { display: flex; height: 31px; background: #285b89; color: #fff; padding: 5px 0 3px; }
.message { flex: 1; padding-left: 3px; line-height: 24px; font-size: 11px; }
.cell { display: flex; align-items: center; justify-content: center; border-left: 1px solid #7898b6; }
.wide { width: 153px; }
.warn { width: 36px; gap: 6px; } .warn svg { width: 14px; height: 12px; }
.kind { width: 152px; }
.tools { width: 497px; justify-content: flex-end; gap: 8px; padding-right: 17px; color: #7cb8f4; }
.tools button { display: flex; align-items: center; gap: 5px; }
.tools svg { width: 16px; height: 16px; }
.tools .spinner { width: 10px; }
.bar { width: 1px; height: 24px; margin: 0 -3px; background: #7898b6; }
.lens { --a: #fff; }

.taskbar { display: flex; height: 34px; background: #27313a; color: #fff; }
.taskbar > button { width: 49px; display: flex; justify-content: center; padding-top: 8px; }
.taskbar > button:first-child { width: 36px; margin-right: 7px; }
.taskbar .on { background: #4f5961; }
.taskbar > button svg { width: 24px; height: 24px; }
.tile { font: bold 8px "Open Sans", sans-serif; fill: #fff; text-anchor: middle; }
.live { font: bold 5px "Open Sans", sans-serif; fill: #fff; }
.tray { margin-left: auto; display: flex; align-items: center; gap: 8px; padding: 5px 9px 0 0; }
.tray button { width: 16px; }
.tray button:last-child { margin-left: 4px; }
.tray svg { width: 16px; height: 16px; }

.timer { position: absolute; left: 897px; top: 0; width: 126px; height: 24px; display: flex; align-items: center; padding: 0 14px 0 7px; background: #f7fcff; border-radius: 0 0 7px 7px; color: #7a7f84; font: 13px/24px "DejaVu Sans", sans-serif; }
.timer svg { width: 16px; height: 16px; margin-right: 11px; }
.timer i { margin-left: auto; border: 5px solid transparent; border-top: 6px solid #6a6e74; border-bottom: 0; }
.fullscreen { position: absolute; left: 10px; top: 11px; font-size: 16px; line-height: 20px; color: #4f70ff; -webkit-text-stroke: 4px #0c0f1c; paint-order: stroke fill; }
.drawer { position: absolute; left: 0; top: 504px; width: 16px; height: 46px; border-radius: 0 14px 14px 0; background: rgba(40, 40, 45, .72); }
.drawer::after { content: ""; position: absolute; left: 4px; top: 18px; border: 5px solid transparent; border-left: 7px solid #7c8486; border-right: 0; }
.watermark { position: absolute; top: 14px; right: 27px; display: flex; gap: 18px; color: #666; pointer-events: none; }
.watermark svg { width: 128px; height: 148px; }
.wm-text { width: 393px; margin-top: -6px; }
.wm-name { font: 500 92px/112px "Noto Sans CJK SC", sans-serif; white-space: nowrap; padding-left: 2px; }
.wm-name span { font: 500 98px/112px Inter, sans-serif; margin-left: 4px; }
.wm-company { display: flex; align-items: center; gap: 7px; font-size: 20px; line-height: 36px; white-space: nowrap; }
.wm-company::before, .wm-company::after { content: ""; flex: 1; height: 4px; background: #666; }
```
